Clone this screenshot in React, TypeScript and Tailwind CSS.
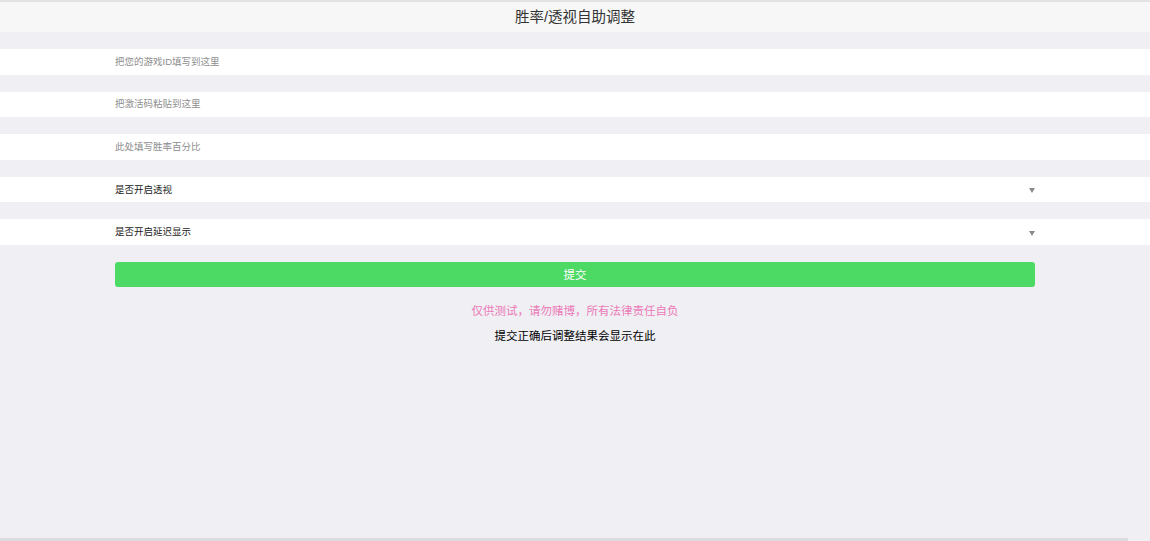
import React from "react";

const font = { fontFamily: '"Liberation Sans", "Noto Sans CJK SC", sans-serif' };

function TextField({ placeholder }: { placeholder: string }) {
  return (
    <div className="mt-[17px] flex h-[25.5px] items-center bg-white pl-[115px]">
      <input
        type="text"
        placeholder={placeholder}
        className="w-full bg-transparent text-[9.5px] text-[#333] outline-none placeholder:text-[#8e8e8e]"
      />
    </div>
  );
}

function SelectField({ label }: { label: string }) {
  return (
    <div className="mt-[17px] flex h-[25.5px] items-center bg-white pl-[115px] pr-[115px]">
      <span className="flex-1 pt-px text-[9.5px] text-[#222]">{label}</span>
      <span className="mt-[3px] h-0 w-0 border-x-[3px] border-t-[5px] border-x-transparent border-t-[#8a8a8a]" />
    </div>
  );
}

export default function App() {
  return (
    <div className="relative min-h-screen bg-[#efeff4]" style={font}>
      <header className="flex h-[32px] items-center justify-center border-t-2 border-[#e3e3e6] bg-[#f7f7f8] pt-[2px]">
        <h1 className="text-[14.5px] text-[#333]">胜率/透视自助调整</h1>
      </header>

      <TextField placeholder="把您的游戏ID填写到这里" />
      <TextField placeholder="把激活码粘贴到这里" />
      <TextField placeholder="此处填写胜率百分比" />
      <SelectField label="是否开启透视" />
      <SelectField label="是否开启延迟显示" />

      <div className="mt-[17px] px-[115px]">
        <button
          type="button"
          className="flex h-[25px] w-full items-center justify-center rounded-[3px] bg-[#4cd964] pt-[3px] text-[11.5px] text-white"
        >
          提交
        </button>
      </div>

      <p className="mt-[16px] text-center text-[11.5px] text-[#ec7ab7]">仅供测试，请勿赌博，所有法律责任自负</p>
      <p className="mt-[8px] text-center text-[11.5px] text-black">提交正确后调整结果会显示在此</p>

      <div className="absolute bottom-0 left-0 h-[3px] w-[1128px] bg-[#dcdce0]" />
    </div>
  );
}
